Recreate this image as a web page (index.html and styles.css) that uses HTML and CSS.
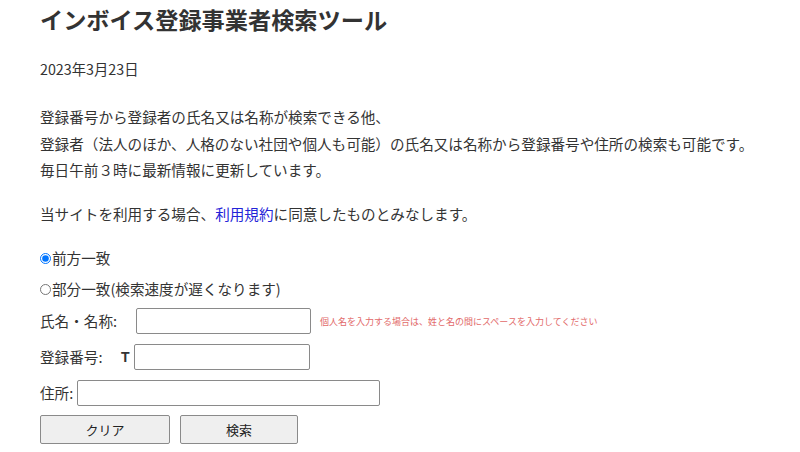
FILE: index.html
```html
<!DOCTYPE html>
<html lang="ja">
<head>
<meta charset="utf-8">
<title>インボイス登録事業者検索ツール</title>
<link rel="stylesheet" href="styles.css">
</head>
<body>
<main class="page">
  <h1 class="title">インボイス登録事業者検索ツール</h1>
  <p class="date">2023年3月23日</p>
  <p class="intro">登録番号から登録者の氏名又は名称が検索できる他、<br>登録者（法人のほか、人格のない社団や個人も可能）の氏名又は名称から登録番号や住所の検索も可能です。<br>毎日午前３時に最新情報に更新しています。</p>
  <p class="terms">当サイトを利用する場合、<a href="#" class="link">利用規約</a>に同意したものとみなします。</p>
  <form class="form">
    <label class="radio-row"><input type="radio" name="mode" class="radio" checked>前方一致</label>
    <label class="radio-row radio-row2"><input type="radio" name="mode" class="radio">部分一致(検索速度が遅くなります)</label>
    <div class="row row-name">
      <span class="label label-name">氏名・名称:</span>
      <input type="text" class="field field-name">
      <span class="hint">個人名を入力する場合は、姓と名の間にスペースを入力してください</span>
    </div>
    <div class="row">
      <span class="label label-num">登録番号:</span>
      <span class="tprefix">T</span>
      <input type="text" class="field field-num">
    </div>
    <div class="row">
      <span class="label label-addr">住所:</span>
      <input type="text" class="field field-addr">
    </div>
    <div class="buttons">
      <button type="button" class="btn btn-clear">クリア</button>
      <button type="button" class="btn btn-search">検索</button>
    </div>
  </form>
</main>
</body>
</html>
```
FILE: styles.css
```css
html, body {
  margin: 0;
  padding: 0;
  background: #ffffff;
}
body {
  font-family: "Noto Sans CJK JP", "Noto Sans", sans-serif;
  color: #333333;
}
.page {
  padding: 0 0 0 40px;
}
.title {
  margin: 0;
  font-size: 23.2px;
  line-height: 38px;
  font-weight: 700;
  color: #333333;
}
.date {
  margin: 18px 0 0;
  font-size: 14.3px;
  line-height: 26px;
}
.intro {
  margin: 22px 0 0;
  font-size: 14.6px;
  line-height: 26.5px;
}
.terms {
  margin: 17.5px 0 0;
  font-size: 14.6px;
  line-height: 26px;
}
.link {
  color: #2323d8;
  text-decoration: none;
}
.form {
  margin: 18px 0 0;
  font-size: 14.6px;
}
.radio-row {
  display: flex;
  align-items: center;
  line-height: 26px;
  height: 26px;
}
.radio-row2 {
  margin-top: 5px;
}
.radio {
  width: 11px;
  height: 11px;
  margin: 0 1px 0 0;
}
.row {
  display: flex;
  align-items: center;
  height: 26px;
  margin-top: 10px;
}
.row-name {
  margin-top: 6px;
}
.label {
  line-height: 26px;
}
.label-name {
  width: 96px;
}
.label-num {
  width: 81px;
}
.label-addr {
  width: 37px;
}
.tprefix {
  font-family: "Liberation Sans", sans-serif;
  font-weight: 700;
  font-size: 14px;
  width: 13px;
}
.field {
  box-sizing: border-box;
  height: 26px;
  margin: 0;
  border: 1px solid #8a8a8a;
  border-radius: 2px;
  background: #ffffff;
  padding: 2px 4px;
}
.field-name {
  width: 175px;
}
.field-num {
  width: 176px;
}
.field-addr {
  width: 303px;
}
.hint {
  margin-left: 9px;
  font-size: 9px;
  color: #e26a6a;
}
.buttons {
  display: flex;
  gap: 10px;
  margin-top: 9px;
}
.btn {
  box-sizing: border-box;
  height: 29px;
  border: 1px solid #8a8a8a;
  border-radius: 2px;
  background: #efefef;
  font-family: "Noto Sans CJK JP", sans-serif;
  font-size: 13px;
  color: #222222;
  padding: 0;
}
.btn-clear {
  width: 130px;
}
.btn-search {
  width: 118px;
}
```
